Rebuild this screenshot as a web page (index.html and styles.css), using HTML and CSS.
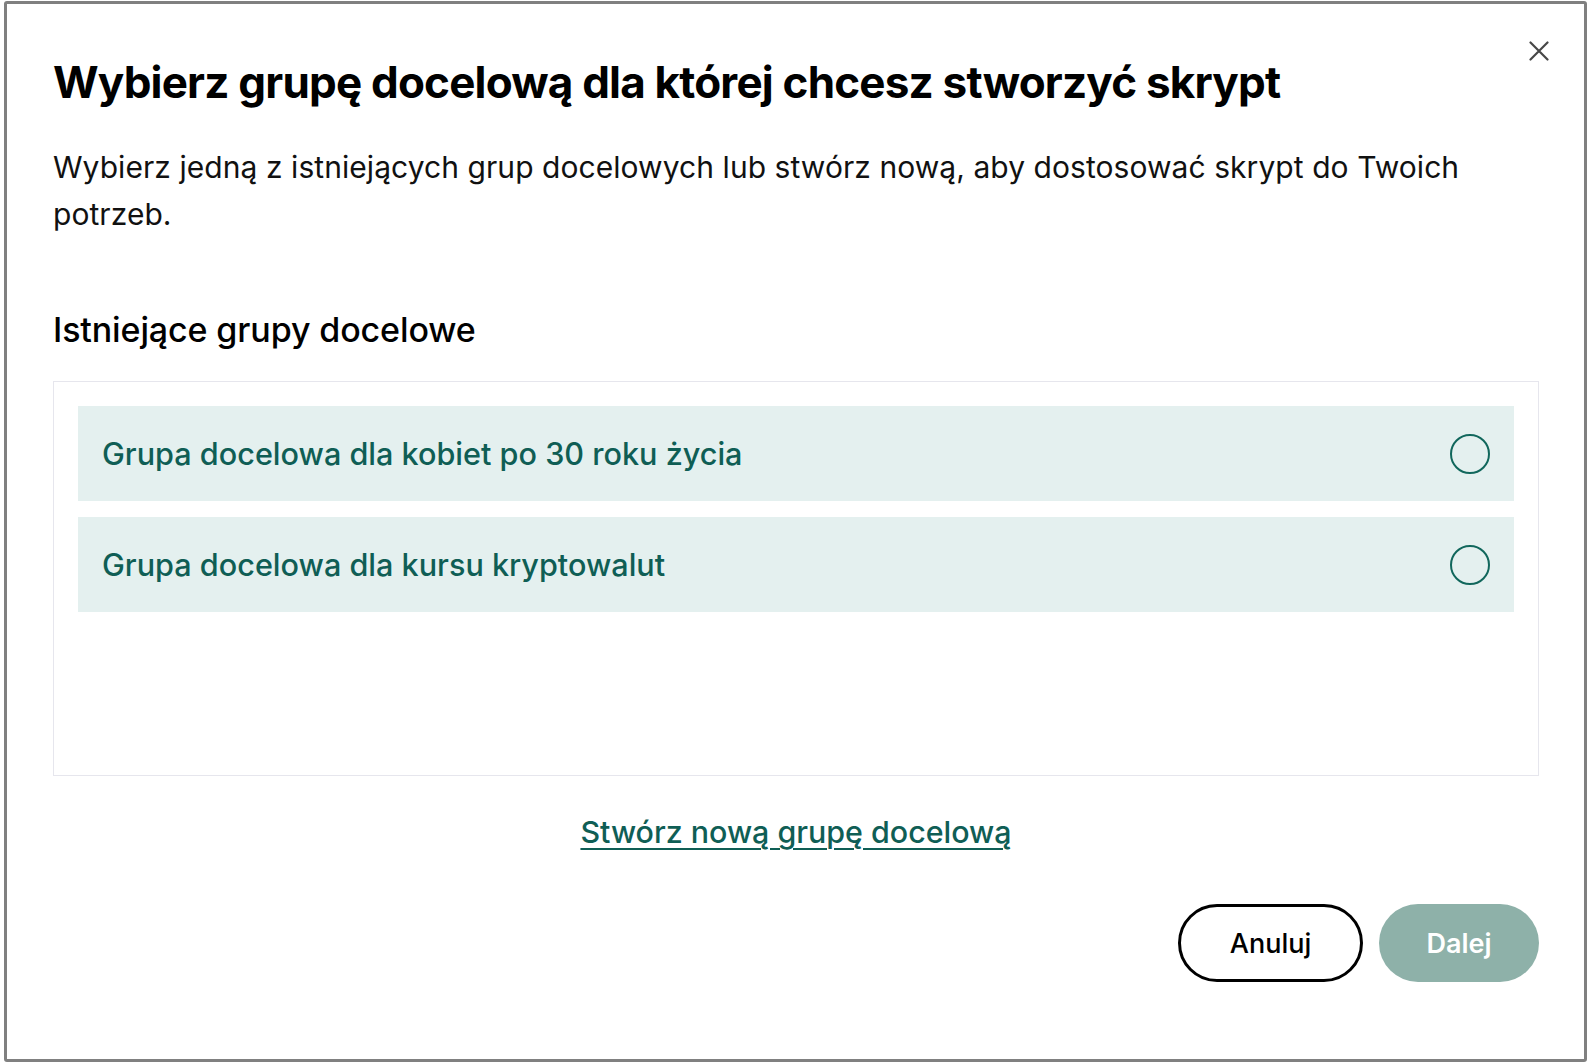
FILE: index.html
```html
<!DOCTYPE html>
<html lang="pl">
<head>
<meta charset="utf-8">
<title>Wybierz grupę docelową</title>
<link rel="stylesheet" href="styles.css">
</head>
<body>
<div class="modal">
  <button class="close" aria-label="Zamknij">
    <svg width="20" height="20" viewBox="0 0 20 20"><path d="M1.5 1.5 L18.5 18.5 M18.5 1.5 L1.5 18.5" stroke="#474747" stroke-width="2.2" stroke-linecap="round" fill="none"/></svg>
  </button>
  <h1 class="title">Wybierz grupę docelową dla której chcesz stworzyć skrypt</h1>
  <p class="desc">Wybierz jedną z istniejących grup docelowych lub stwórz nową, aby dostosować skrypt do Twoich potrzeb.</p>
  <h2 class="section">Istniejące grupy docelowe</h2>
  <div class="list">
    <label class="item"><span class="item-text">Grupa docelowa dla kobiet po 30 roku życia</span><span class="radio"></span></label>
    <label class="item"><span class="item-text">Grupa docelowa dla kursu kryptowalut</span><span class="radio"></span></label>
  </div>
  <div class="link-row"><a class="create" href="#">Stwórz nową grupę docelową</a></div>
  <div class="actions">
    <button class="btn btn-cancel">Anuluj</button>
    <button class="btn btn-next">Dalej</button>
  </div>
</div>
</body>
</html>
```

FILE: styles.css
```css
* { box-sizing: border-box; }
html, body { margin: 0; padding: 0; background: #fff; }
body { font-family: Inter, "Noto Sans", sans-serif; color: #000; }

.modal {
  position: relative;
  margin: 1px 5px 2px 4px;
  height: 1061px;
  border: 3px solid #808080;
  border-radius: 3px;
  background: #fff;
  padding: 0 45px 0 46px;
  display: flex;
  flex-direction: column;
}

.close {
  position: absolute;
  top: 37px;
  left: 1522px;
  width: 20px;
  height: 20px;
  padding: 0;
  border: 0;
  background: transparent;
  display: flex;
}

.title {
  margin: 53px 0 0 0;
  font-size: 44px;
  line-height: 50px;
  font-weight: 700;
  letter-spacing: -0.8px;
  color: #000;
}

.desc {
  margin: 37px 0 0 0;
  font-size: 30px;
  line-height: 47px;
  font-weight: 400;
  letter-spacing: 0.06px;
  color: #111;
}

.section {
  margin: 72px 0 0 0;
  font-size: 34px;
  line-height: 40px;
  font-weight: 500;
  letter-spacing: -0.12px;
  color: #000;
}

.list {
  margin-top: 31px;
  height: 395px;
  border: 1px solid #e6e6ed;
  padding: 24px;
  display: flex;
  flex-direction: column;
  gap: 16px;
}

.item {
  height: 95px;
  background: #e4f0ef;
  display: flex;
  align-items: center;
  justify-content: space-between;
  padding: 0 24px 0 24px;
}

.item-text {
  font-size: 30.6px;
  font-weight: 500;
  color: #0f5e55;
}

.radio {
  width: 40px;
  height: 40px;
  border: 2px solid #11675c;
  border-radius: 50%;
}

.link-row {
  margin-top: 38px;
  display: flex;
  justify-content: center;
}

.create {
  font-size: 30.4px;
  line-height: 36px;
  font-weight: 500;
  color: #0f5e55;
  text-decoration: underline;
  text-decoration-thickness: 2px;
  text-underline-offset: 5px;
}

.actions {
  margin-top: 54px;
  display: flex;
  justify-content: flex-end;
  gap: 16px;
}

.btn {
  height: 78px;
  border-radius: 39px;
  font-family: Inter, "Noto Sans", sans-serif;
  font-size: 27px;
  font-weight: 500;
  cursor: pointer;
}

.btn-cancel {
  width: 185px;
  background: #fff;
  border: 3px solid #000;
  color: #000;
}

.btn-next {
  width: 160px;
  background: #8eb1a9;
  border: 0;
  color: #fff;
  font-weight: 600;
}
```
